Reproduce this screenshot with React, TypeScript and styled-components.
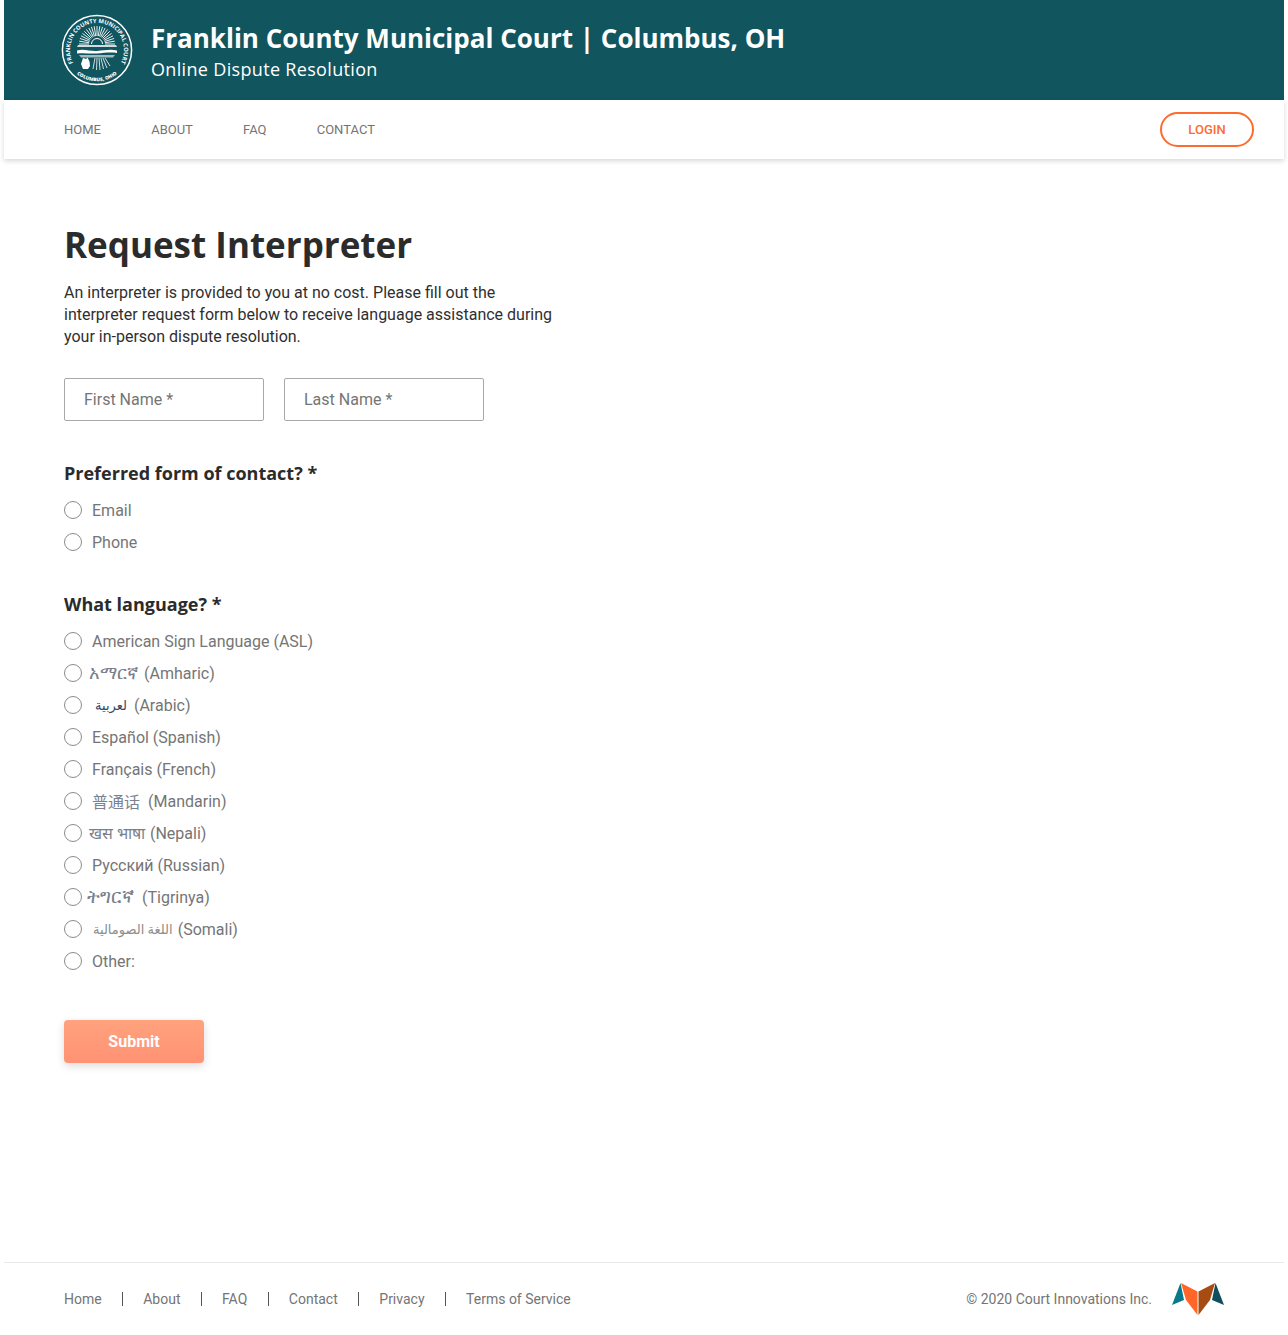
import styled, { createGlobalStyle } from 'styled-components';

const GlobalStyle = createGlobalStyle`
  html, body { margin: 0; padding: 0; background: #fff; }
  body { font-family: Roboto, "Liberation Sans", sans-serif; }
`;

const navLinks = ['HOME', 'ABOUT', 'FAQ', 'CONTACT'];
const footerLinks = ['Home', 'About', 'FAQ', 'Contact', 'Privacy', 'Terms of Service'];

const languages = [
    { native: 'አማርኛ', name: '(Amharic)', shift: -3, gap: 6, color: '#7a7f8c', size: 18 },
    { native: 'لعربية', name: '(Arabic)', shift: 3, gap: 7, color: '#3d4560', size: 13 },
    { name: 'Español (Spanish)' },
    { name: 'Français (French)' },
    { native: '普通话', name: '(Mandarin)', shift: 0, gap: 8, color: '#7a8290', size: 16 },
    { native: 'खस भाषा', name: '(Nepali)', shift: -3, gap: 5, color: '#7a7f8c', size: 16 },
    { name: 'Русский (Russian)' },
    { native: 'ትግርኛ', name: '(Tigrinya)', shift: -5, gap: 8, color: '#7a7f8c', size: 18.5 },
    { native: 'اللغة الصومالية', name: '(Somali)', shift: 1, gap: 5, color: '#8d8d8d', size: 13 },
    { name: 'Other:' },
];

const Page = styled.div`
    width: 1280px;
    height: 1335px;
    margin: 0 4px;
    display: flex;
    flex-direction: column;
`;

const Banner = styled.header`
    height: 100px;
    background: #11555f;
    padding: 0 0 0 57px;
    display: flex;
    align-items: center;
    gap: 18px;
    box-sizing: border-box;
`;

const BannerText = styled.div`
    display: flex;
    flex-direction: column;
    padding-top: 1px;
    font-family: 'Open Sans', sans-serif;
    color: #fff;
`;

const BannerTitle = styled.div`
    font-size: 26px;
    font-weight: 700;
    line-height: 36px;
`;

const BannerSub = styled.div`
    font-size: 18px;
    line-height: 26px;
    letter-spacing: 0.33px;
`;

const Nav = styled.nav`
    height: 59px;
    padding: 0 30px 0 60px;
    display: flex;
    align-items: center;
    box-shadow: 0 2px 5px rgba(0, 0, 0, 0.16);
    position: relative;
`;

const NavLink = styled.a`
    font-size: 13px;
    color: #757575;
    margin-right: 50.2px;
`;

const LoginButton = styled.button`
    margin-left: auto;
    width: 94px;
    height: 35px;
    border: 2px solid #ff6b2d;
    border-radius: 18px;
    background: #fff;
    color: #ff6b2d;
    font-family: Roboto, sans-serif;
    font-size: 13px;
    font-weight: 500;
    padding: 0;
`;

const Main = styled.main`
    flex: 1;
    padding: 62px 60px 0;
`;

const Title = styled.h1`
    margin: 0;
    font-family: 'Open Sans', sans-serif;
    font-size: 35px;
    line-height: 48px;
    font-weight: 700;
    color: #2b2b2b;
`;

const Intro = styled.p`
    margin: 13px 0 0;
    width: 500px;
    font-size: 16px;
    line-height: 22px;
    color: #2f2f2f;
`;

const NameRow = styled.div`
    display: flex;
    gap: 20px;
    margin-top: 30px;
`;

const TextInput = styled.input`
    width: 200px;
    height: 43px;
    box-sizing: border-box;
    border: 1px solid #a8a8a8;
    border-radius: 2px;
    padding: 0 19px;
    font-family: Roboto, sans-serif;
    font-size: 16px;
    &::placeholder { color: #757575; opacity: 1; }
`;

const Legend = styled.h2<{ $top: number }>`
    margin: ${p => p.$top}px 0 0;
    font-family: 'Open Sans', sans-serif;
    font-size: 18px;
    line-height: 26px;
    font-weight: 700;
    color: #2b2b2b;
`;

const RadioList = styled.div`
    display: flex;
    flex-direction: column;
    margin-top: 8px;
`;

const RadioRow = styled.label`
    height: 32px;
    display: flex;
    align-items: center;
    font-size: 16px;
    color: #757575;
`;

const RadioCircle = styled.span`
    width: 18px;
    height: 18px;
    box-sizing: border-box;
    border: 1px solid #8c8c8c;
    border-radius: 50%;
    margin-right: 10px;
    flex: none;
`;

const Native = styled.span<{ $shift: number; $gap: number; $color: string; $size: number }>`
    margin-left: ${p => p.$shift}px;
    margin-right: ${p => p.$gap}px;
    color: ${p => p.$color};
    font-family: Roboto, 'DejaVu Sans', 'Noto Sans CJK SC', sans-serif;
    font-size: ${p => p.$size}px;
`;

const SubmitButton = styled.button`
    display: block;
    width: 140px;
    height: 43px;
    margin-top: 43px;
    border: none;
    border-radius: 4px;
    background: linear-gradient(180deg, #ffa27d, #ff9274);
    box-shadow: 0 3px 8px rgba(0, 0, 0, 0.14);
    color: #fff;
    font-family: Roboto, sans-serif;
    font-size: 16px;
    font-weight: 700;
`;

const Footer = styled.footer`
    height: 71px;
    margin-bottom: 1px;
    border-top: 1px solid #eaeaea;
    padding: 0 60px;
    display: flex;
    align-items: center;
    font-size: 14px;
    color: #757575;
`;

const FooterLink = styled.a`
    &:not(:last-of-type)::after {
        content: '';
        display: inline-block;
        width: 1px;
        height: 14px;
        background: #555;
        margin: 0 20.27px;
        vertical-align: -2px;
    }
`;

const Copyright = styled.span`
    margin-left: auto;
    margin-right: 20px;
`;

const Seal = () => (
    <svg width="72" height="72" viewBox="0 0 72 72">
        <defs>
            <path id="seal-top" d="M16.600 54.700a27 27 0 1 1 38.800 0" />
            <path id="seal-bottom" d="M15.500 59.600a31.200 31.200 0 0 0 41 0" />
        </defs>
        <circle cx="36" cy="36" r="34.600" fill="none" stroke="#fff" strokeWidth="1.500" />
        <text fontFamily="Open Sans, sans-serif" fontSize="5.800" fontWeight="700" fill="#fff">
            <textPath href="#seal-top" startOffset="50%" textAnchor="middle">FRANKLIN COUNTY MUNICIPAL COURT</textPath>
        </text>
        <text fontFamily="Open Sans, sans-serif" fontSize="4.800" fontWeight="800" fill="#fff">
            <textPath href="#seal-bottom" startOffset="50%" textAnchor="middle">COLUMBUS, OHIO</textPath>
        </text>
        <g stroke="#fff" strokeWidth="0.900">
            {Array.from({ length: 21 }).map((_, i) => {
                const a = Math.PI + (Math.PI * i) / 20;
                return (
                    <line
                        key={i}
                        x1={36 + 8 * Math.cos(a)}
                        y1={30 + 8 * Math.sin(a)}
                        x2={36 + 18 * Math.cos(a)}
                        y2={30 + 18 * Math.sin(a)}
                    />
                );
            })}
        </g>
        <path d="M30.500 30a5.500 5.500 0 0 1 11 0" fill="none" stroke="#fff" strokeWidth="1" />
        <path d="M17 31h38l1 2H16z" fill="#fff" opacity="0.8" />
        <path d="M16 36.500c7-2 13 1 20 .5s13-2 20-.5v2.500c-7-1-13 0-20 .5s-13-1-20 0z" fill="#fff" />
        <path d="M18 41h36l-2 2.500H20z" fill="#fff" opacity="0.6" />
        <path d="M22 44l3 1 1.500-1.500 2 4 .5 4.500-2 3h-5l-2-5z" fill="#fff" />
        <g stroke="#fff" strokeWidth="0.800">
            <line x1="34" y1="44" x2="32" y2="55" />
            <line x1="36" y1="44" x2="35.500" y2="56" />
            <line x1="38" y1="44" x2="39" y2="56" />
            <line x1="40" y1="44" x2="42.500" y2="55" />
            <line x1="42" y1="44" x2="46" y2="54" />
            <line x1="44" y1="44" x2="49" y2="52" />
        </g>
    </svg>
);

const Mark = () => (
    <svg width="52" height="34" viewBox="0 0 52 34">
        <path d="M8.500 1L0 23 12 18z" fill="#067a8a" />
        <path d="M9 1L25.500 9.500V33L14 18z" fill="#ff6628" />
        <path d="M43 1L26.500 9.500V33L38 18z" fill="#a64b12" />
        <path d="M43.500 1L52 23 40 18z" fill="#0d4f5c" />
    </svg>
);

const Radio = ({ children }: { children: React.ReactNode }) => (
    <RadioRow>
        <RadioCircle />
        {children}
    </RadioRow>
);

const App = () => {
    return (
        <Page>
            <GlobalStyle />
            <Banner>
                <Seal />
                <BannerText>
                    <BannerTitle>Franklin County Municipal Court | Columbus, OH</BannerTitle>
                    <BannerSub>Online Dispute Resolution</BannerSub>
                </BannerText>
            </Banner>
            <Nav>
                {navLinks.map(link => (
                    <NavLink key={link}>{link}</NavLink>
                ))}
                <LoginButton>LOGIN</LoginButton>
            </Nav>
            <Main>
                <Title>Request Interpreter</Title>
                <Intro>
                    An interpreter is provided to you at no cost. Please fill out the interpreter request form below to
                    receive language assistance during your in-person dispute resolution.
                </Intro>
                <NameRow>
                    <TextInput placeholder="First Name *" />
                    <TextInput placeholder="Last Name *" />
                </NameRow>
                <Legend $top={39}>Preferred form of contact? *</Legend>
                <RadioList>
                    <Radio>Email</Radio>
                    <Radio>Phone</Radio>
                </RadioList>
                <Legend $top={33}>What language? *</Legend>
                <RadioList>
                    <Radio>American Sign Language (ASL)</Radio>
                    {languages.map(lang => (
                        <Radio key={lang.name}>
                            {lang.native && (
                                <Native $shift={lang.shift} $gap={lang.gap} $color={lang.color} $size={lang.size}>
                                    {lang.native}
                                </Native>
                            )}
                            {lang.name}
                        </Radio>
                    ))}
                </RadioList>
                <SubmitButton>Submit</SubmitButton>
            </Main>
            <Footer>
                {footerLinks.map(link => (
                    <FooterLink key={link}>{link}</FooterLink>
                ))}
                <Copyright>© 2020 Court Innovations Inc.</Copyright>
                <Mark />
            </Footer>
        </Page>
    );
};

export default App;
